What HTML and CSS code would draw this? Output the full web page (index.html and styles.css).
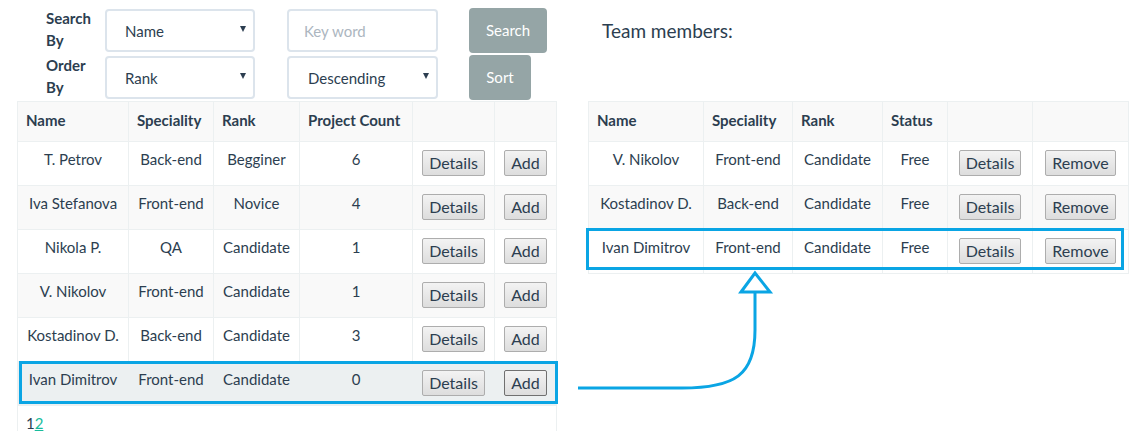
FILE: index.html
```html
<!DOCTYPE html>
<html>
<head>
<meta charset="utf-8">
<link rel="stylesheet" href="styles.css">
</head>
<body>
<div class="page">
  <div class="left-col">
    <div class="form">
      <div class="form-row">
        <div class="label">Search By</div>
        <div class="select sel-a"><span>Name</span><span class="caret"></span></div>
        <div class="input"><span class="placeholder">Key word</span></div>
        <button class="btn-gray btn-search">Search</button>
      </div>
      <div class="form-row">
        <div class="label">Order By</div>
        <div class="select sel-a"><span>Rank</span><span class="caret"></span></div>
        <div class="select sel-b"><span>Descending</span><span class="caret"></span></div>
        <button class="btn-gray btn-sort">Sort</button>
      </div>
    </div>
    <div class="table-wrap">
      <table class="tbl tbl-left">
        <colgroup>
          <col style="width:111px"><col style="width:85px"><col style="width:86px"><col style="width:113px"><col style="width:82px"><col style="width:62px">
        </colgroup>
        <tbody>
          <tr class="head"><th>Name</th><th>Speciality</th><th>Rank</th><th>Project Count</th><th></th><th></th></tr>
          <tr><td>T. Petrov</td><td>Back-end</td><td>Begginer</td><td>6</td><td><button class="btn">Details</button></td><td><button class="btn">Add</button></td></tr>
          <tr class="odd"><td>Iva Stefanova</td><td>Front-end</td><td>Novice</td><td>4</td><td><button class="btn">Details</button></td><td><button class="btn">Add</button></td></tr>
          <tr><td>Nikola P.</td><td>QA</td><td>Candidate</td><td>1</td><td><button class="btn">Details</button></td><td><button class="btn">Add</button></td></tr>
          <tr class="odd"><td>V. Nikolov</td><td>Front-end</td><td>Candidate</td><td>1</td><td><button class="btn">Details</button></td><td><button class="btn">Add</button></td></tr>
          <tr><td>Kostadinov D.</td><td>Back-end</td><td>Candidate</td><td>3</td><td><button class="btn">Details</button></td><td><button class="btn">Add</button></td></tr>
          <tr class="hover"><td>Ivan Dimitrov</td><td>Front-end</td><td>Candidate</td><td>0</td><td><button class="btn">Details</button></td><td><button class="btn btn-dark">Add</button></td></tr>
          <tr class="pager"><td colspan="6">1<a class="link" href="#">2</a></td></tr>
        </tbody>
      </table>
      <div class="highlight hl-left"></div>
    </div>
  </div>
  <div class="right-col">
    <div class="title">Team members:</div>
    <div class="table-wrap">
      <table class="tbl tbl-right">
        <colgroup>
          <col style="width:115px"><col style="width:89px"><col style="width:90px"><col style="width:65px"><col style="width:85px"><col style="width:96px">
        </colgroup>
        <tbody>
          <tr class="head"><th>Name</th><th>Speciality</th><th>Rank</th><th>Status</th><th></th><th></th></tr>
          <tr><td>V. Nikolov</td><td>Front-end</td><td>Candidate</td><td>Free</td><td><button class="btn">Details</button></td><td><button class="btn">Remove</button></td></tr>
          <tr class="odd"><td>Kostadinov D.</td><td>Back-end</td><td>Candidate</td><td>Free</td><td><button class="btn">Details</button></td><td><button class="btn">Remove</button></td></tr>
          <tr><td>Ivan Dimitrov</td><td>Front-end</td><td>Candidate</td><td>Free</td><td><button class="btn">Details</button></td><td><button class="btn">Remove</button></td></tr>
        </tbody>
      </table>
      <div class="highlight hl-right"></div>
    </div>
  </div>
  <svg class="arrow" width="1139" height="431" viewBox="0 0 1139 431">
    <path d="M578 388 H682 C735 388 755 375 755 330 V292" fill="none" stroke="#0aa5e4" stroke-width="3"/>
    <path d="M741 292 L755 273 L770 292 Z" fill="none" stroke="#0aa5e4" stroke-width="3" stroke-linejoin="miter"/>
  </svg>
</div>
</body>
</html>
```

FILE: styles.css
```css
* { box-sizing: border-box; }
html, body { margin: 0; padding: 0; background: #fff; }
body {
  font-family: Lato, "Open Sans", sans-serif;
  font-size: 15px;
  color: #2c3e50;
  width: 1139px;
  height: 431px;
  overflow: hidden;
}
.page {
  position: relative;
  display: flex;
  padding-left: 17px;
  height: 431px;
}
.left-col { width: 539px; }
.right-col { width: 540px; margin-left: 32px; }

.form { height: 101px; padding-top: 7px; }
.form-row {
  display: flex;
  align-items: center;
  height: 47px;
  padding-left: 29px;
}
.label {
  width: 59px;
  font-weight: 700;
  line-height: 22px;
  margin-bottom: 4px;
}
.select, .input {
  height: 43px;
  border: 2px solid #dce4ec;
  border-radius: 4px;
  display: flex;
  align-items: center;
  background: #fff;
}
.select {
  justify-content: space-between;
  padding: 0 7px 0 18px;
}
.sel-a { width: 150px; }
.sel-b { width: 151px; margin-left: 32px; padding-left: 19px; }
.input { width: 151px; margin-left: 32px; padding: 0 15px; }
.placeholder { color: #acb6c0; }
.caret {
  width: 0; height: 0;
  border-left: 3px solid transparent;
  border-right: 3px solid transparent;
  border-top: 6px solid #2c3e50;
  margin-top: -3px;
}
.btn-gray {
  height: 45px;
  margin-left: 31px;
  background: #95a5a6;
  color: #fff;
  border: 0;
  border-radius: 4px;
  font-family: Lato, sans-serif;
  font-size: 15px;
  padding: 0;
  margin-top: -1px;
}
.btn-search { width: 78px; }
.btn-sort { width: 62px; }

.table-wrap { position: relative; }
.tbl {
  border-collapse: collapse;
  table-layout: fixed;
}
.tbl-left { width: 539px; }
.tbl-right { width: 540px; }
.tbl th, .tbl td {
  border: 1px solid #ecf0f1;
  line-height: 21px;
  vertical-align: top;
}
.tbl th {
  text-align: left;
  font-weight: 700;
  padding: 8px 8px 10px 8px;
  height: 40px;
}
.tbl td {
  text-align: center;
  padding: 7px 4px 9px;
  height: 44px;
  white-space: nowrap;
}
.tbl .head { background: #f9f9f9; }
.tbl .odd { background: #f9f9f9; }
.tbl .hover { background: #ecf0f1; }
.tbl .pager td {
  text-align: left;
  padding: 7px 8px;
  height: 40px;
}
.link { color: #18bc9c; text-decoration: underline; }

.btn {
  display: inline-block;
  height: 26px;
  margin-top: 1px;
  padding: 0 6px;
  font-family: Lato, sans-serif;
  font-size: 16px;
  color: #2c3e50;
  background: linear-gradient(#f3f3f3, #dddddd);
  border: 1px solid #adadad;
  border-radius: 2px;
  line-height: 22px;
  vertical-align: top;
}
.btn-dark { border-color: #707070; }

.title {
  height: 101px;
  padding: 20px 0 0 14px;
  font-size: 19px;
  line-height: 22px;
}

.highlight {
  position: absolute;
  border: 3px solid #0aa5e4;
  pointer-events: none;
}
.hl-left { left: 2px; top: 260px; width: 539px; height: 43px; }
.hl-right { left: -2px; top: 127px; width: 538px; height: 42px; }

.arrow {
  position: absolute;
  left: 0;
  top: 0;
}
```
